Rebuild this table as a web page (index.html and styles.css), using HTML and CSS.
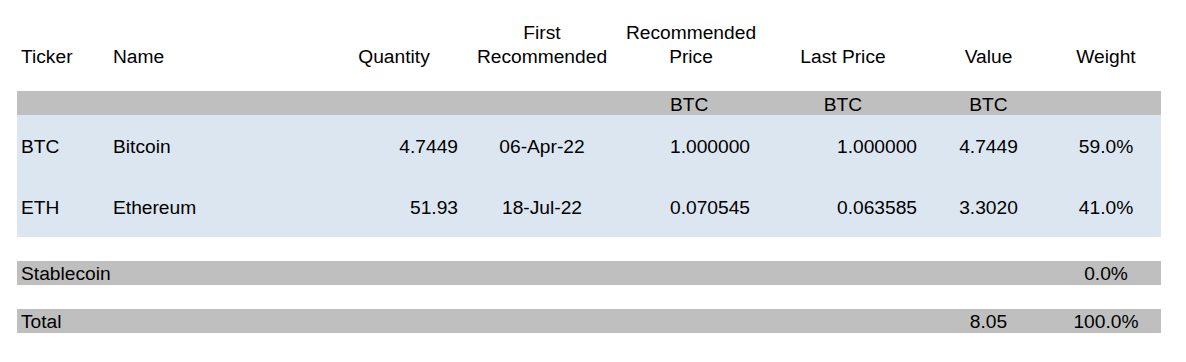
FILE: index.html
```html
<!DOCTYPE html>
<html>
<head>
<meta charset="utf-8">
<link rel="stylesheet" href="styles.css">
</head>
<body>
<div class="sheet">
  <div class="row head">
    <div class="c first">Ticker</div>
    <div class="c name">Name</div>
    <div class="c ctr">Quantity</div>
    <div class="c ctr">First<br>Recommended</div>
    <div class="c ctr">Recommended<br>Price</div>
    <div class="c ctr">Last Price</div>
    <div class="c ctr">Value</div>
    <div class="c ctr">Weight</div>
  </div>

  <div class="row band units">
    <div class="c first"></div>
    <div class="c name"></div>
    <div class="c qty"></div>
    <div class="c ctr"></div>
    <div class="c rp">BTC</div>
    <div class="c ctr">BTC</div>
    <div class="c ctr">BTC</div>
    <div class="c ctr"></div>
  </div>

  <div class="holdings">
    <div class="row data">
      <div class="c first">BTC</div>
      <div class="c name">Bitcoin</div>
      <div class="c qty">4.7449</div>
      <div class="c ctr">06-Apr-22</div>
      <div class="c rp">1.000000</div>
      <div class="c lp">1.000000</div>
      <div class="c ctr">4.7449</div>
      <div class="c ctr">59.0%</div>
    </div>
    <div class="row data">
      <div class="c first">ETH</div>
      <div class="c name">Ethereum</div>
      <div class="c qty">51.93</div>
      <div class="c ctr">18-Jul-22</div>
      <div class="c rp">0.070545</div>
      <div class="c lp">0.063585</div>
      <div class="c ctr">3.3020</div>
      <div class="c ctr">41.0%</div>
    </div>
  </div>

  <div class="row band summary">
    <div class="c first span2">Stablecoin</div>
    <div class="c qty"></div>
    <div class="c ctr"></div>
    <div class="c rp"></div>
    <div class="c lp"></div>
    <div class="c ctr"></div>
    <div class="c ctr">0.0%</div>
  </div>

  <div class="row band summary">
    <div class="c first span2">Total</div>
    <div class="c qty"></div>
    <div class="c ctr"></div>
    <div class="c rp"></div>
    <div class="c lp"></div>
    <div class="c ctr">8.05</div>
    <div class="c ctr">100.0%</div>
  </div>
</div>
</body>
</html>
```

FILE: styles.css
```css
html, body {
  margin: 0;
  padding: 0;
  background: #ffffff;
}

body {
  font-family: "Liberation Sans", Arial, sans-serif;
  font-size: 19.2px;
  color: #000000;
}

.sheet {
  width: 1144px;
  margin-left: 17px;
  padding-top: 21px;
}

.row {
  display: grid;
  grid-template-columns: 91px 218px 136px 160px 138px 166px 125px 110px;
}

.c {
  white-space: nowrap;
  line-height: 20px;
}

.first { padding-left: 4px; }
.span2 { grid-column: span 2; }
.name { padding-left: 5px; }
.ctr { text-align: center; }
.qty { text-align: right; padding-right: 4px; }
.rp { text-align: left; padding-left: 48px; }
.lp { text-align: right; padding-right: 9px; }

.head {
  height: 48px;
  align-items: end;
  margin-bottom: 22px;
}

.head .c {
  line-height: 24px;
}

.band {
  background: #bfbfbf;
  height: 24px;
}

.band .c {
  padding-top: 4px;
}

.summary {
  margin-top: 24px;
}

.summary .c {
  padding-top: 3px;
}

.holdings {
  background: #dce6f1;
}

.data {
  height: 61px;
  align-items: center;
}

.data .c {
  padding-top: 2px;
}
```
